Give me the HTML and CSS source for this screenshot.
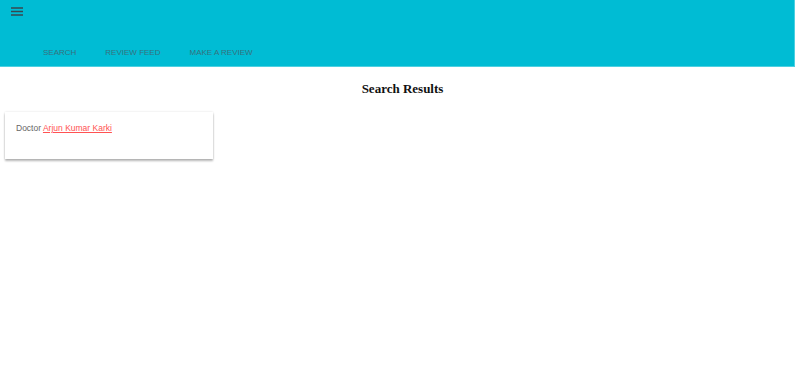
FILE: index.html
```html
<!DOCTYPE html>
<html lang="en">
<head>
<meta charset="UTF-8">
<title>Search Results</title>
<meta name="viewport" content="width=device-width, initial-scale=1">
<link rel="stylesheet" href="styles.css">
</head>
<body>

<div class="page">

<div class="header">
<div class="menu">
<svg width="12" height="10" viewBox="0 0 12 10"><path d="M0 1h12M0 4.5h12M0 8h12" stroke="#37474f" stroke-width="1.6"/></svg>
</div>
<div class="tabs">
<a class="tab" href="#">Search</a>
<a class="tab" href="#">Review Feed</a>
<a class="tab" href="#">Make a Review</a>
</div>
</div>

<h2 class="title">Search Results</h2>

<div class="card">
Doctor <a href="#" class="doc">Arjun Kumar Karki</a>
</div>

</div>

</body>
</html>
```

FILE: styles.css
```css
body{
margin:0;
background:white;
font-family:"Liberation Sans",Arial,sans-serif;
}

.page{
width:795px;
padding-bottom:40px;
}

.header{
background:#00bcd4;
height:67px;
border-bottom:1px solid #4dd0e1;
border-right:1px solid #4dd0e1;
box-sizing:border-box;
}

.menu{
padding:7px 0 0 11px;
height:10px;
}

.menu svg{display:block}

.tabs{
display:flex;
gap:29px;
padding:31px 0 0 43px;
}

.tab{
color:#37717d;
text-decoration:none;
text-transform:uppercase;
font-size:8px;
}

.title{
font-family:"Liberation Serif",serif;
font-weight:bold;
font-size:13px;
text-align:center;
margin:14px 0 0 10px;
color:#111;
}

.card{
width:208px;
height:47px;
box-sizing:border-box;
margin:15px 0 0 5px;
padding:11px 11px;
background:white;
box-shadow:0 2px 2px rgba(0,0,0,0.28),0 0 2px rgba(0,0,0,0.12);
font-size:8.5px;
color:#666;
}

.doc{
color:#ff5252;
}
```
